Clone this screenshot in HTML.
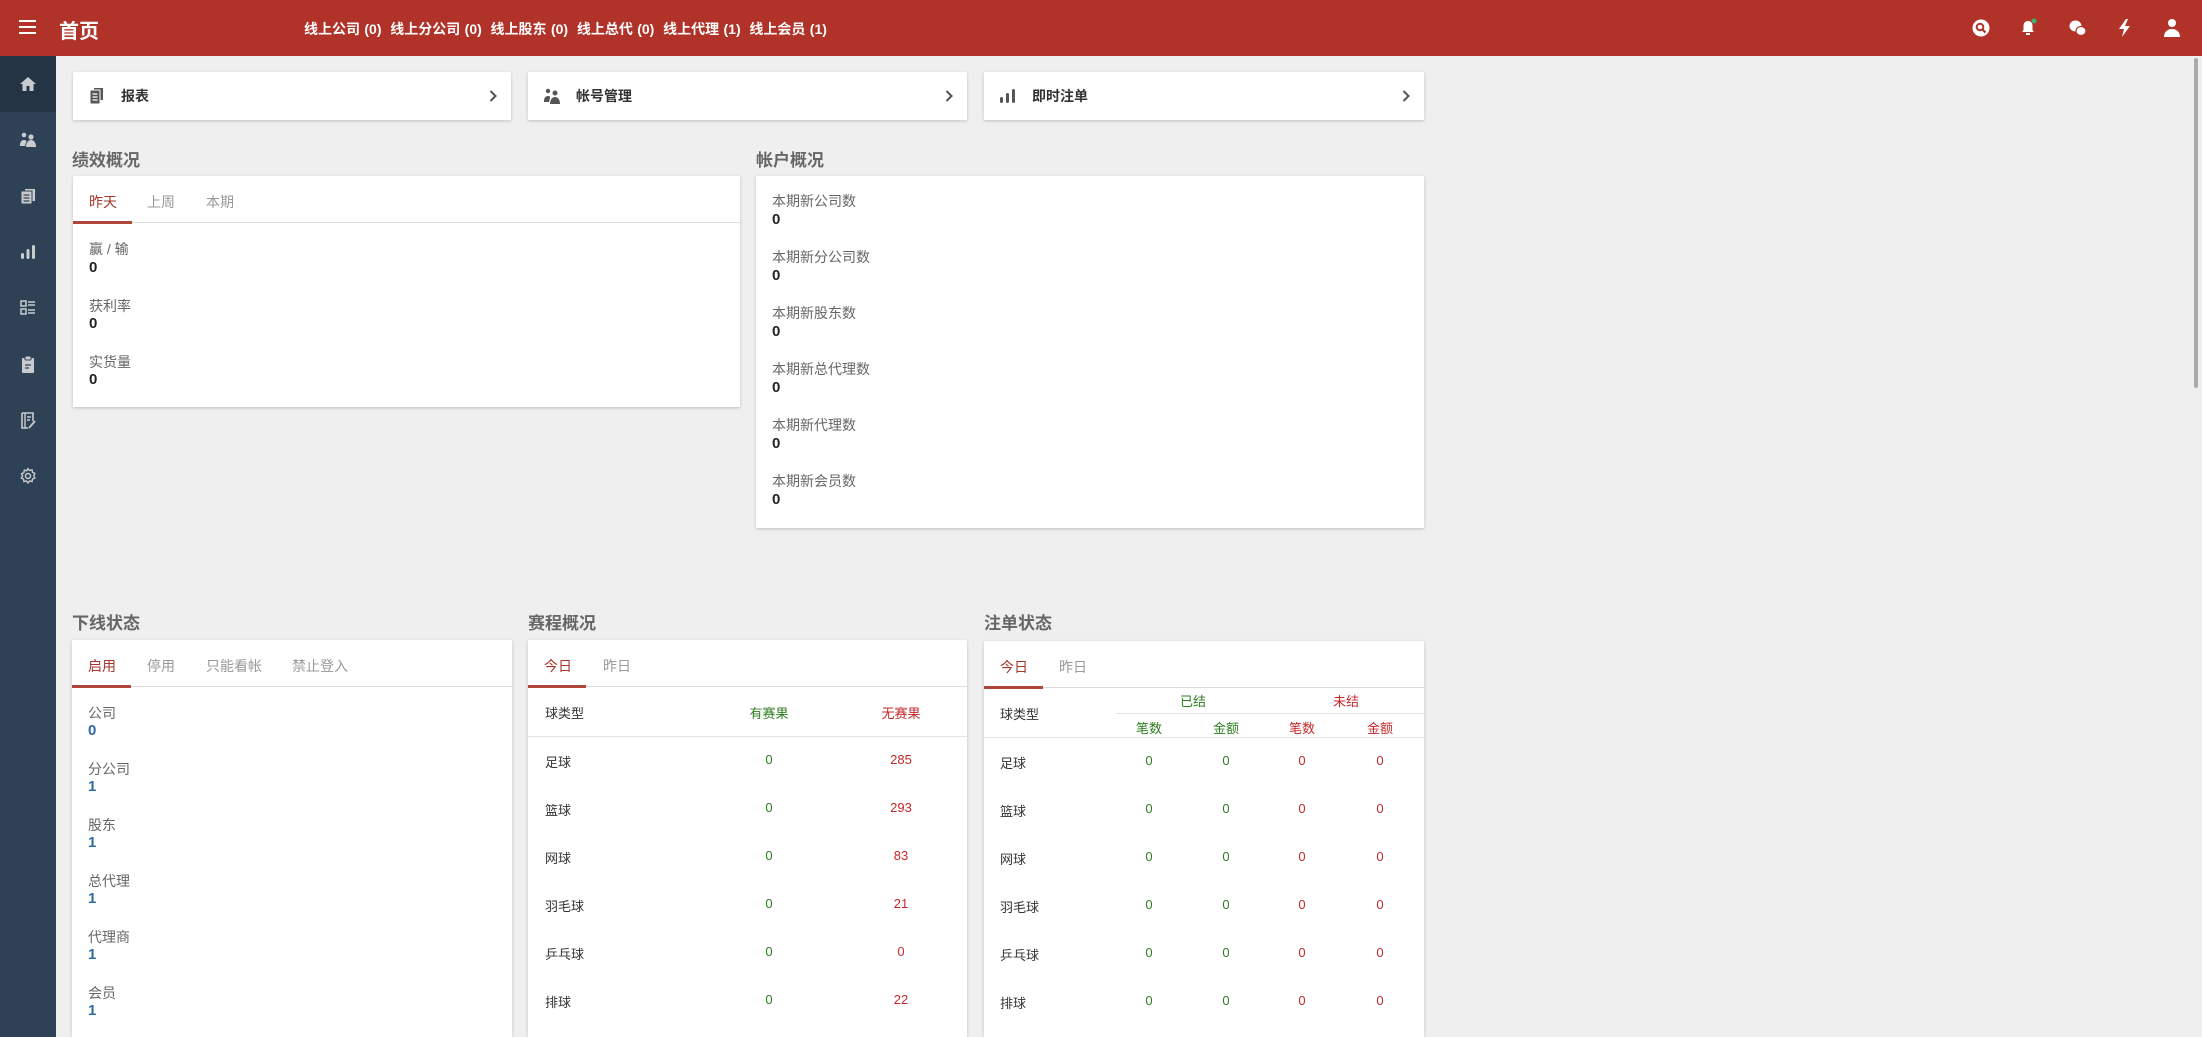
<!DOCTYPE html>
<html><head><meta charset="utf-8"><style>
*{box-sizing:border-box;margin:0;padding:0}
html{width:2202px;height:1037px;overflow:hidden;background:#efeff0}
body{width:2202px;height:1037px;overflow:hidden;font-family:"Liberation Sans","Noto Sans CJK SC",sans-serif;color:#333;position:relative;background:#efeff0}
.hdr{position:absolute;left:0;top:0;width:2202px;height:56px;background:#b03228;color:#fff}
.side{position:absolute;left:0;top:56px;width:56px;height:981px;background:#2f4255}
.side .act{position:absolute;left:0;top:0;width:56px;height:56px;background:#243444}
.side svg{position:absolute;left:18px;width:20px;height:20px}
.card{position:absolute;background:#fff;box-shadow:0 1px 3px rgba(0,0,0,.2)}
.nav{height:48px;top:72px}
.nav .t{position:absolute;left:48px;top:14px;font-size:14px;font-weight:bold;color:#333}
.nav svg.i{position:absolute;left:15px;top:15px;width:18px;height:18px}
.nav .ch{position:absolute;right:14px;top:17px;width:8px;height:14px}
.ttl{position:absolute;font-size:17px;color:#666;font-weight:600}
.tabs{position:absolute;left:0;top:0;right:0;height:47px;border-bottom:1px solid #ddd}
.tab{position:absolute;top:16px;font-size:14px;color:#999}
.tab.a{color:#a5362c}
.ul{position:absolute;left:0;top:45px;height:3px;background:#b0453a}
.lb{position:absolute;font-size:14px;color:#666}
.v{position:absolute;font-size:15px;font-weight:bold;color:#222}
.bl{color:#2f6aa3}
.c{position:absolute;font-size:13px;transform:translateX(-50%)}
.g{color:#2e7d1e}.r{color:#c62828}
.hl{position:absolute;height:1px;background:#e2e2e2}
</style></head><body>
<div class="hdr">
 <div style="position:absolute;left:19px;top:20px;width:17px;height:2px;background:#fff;box-shadow:0 6px 0 #fff,0 12px 0 #fff"></div>
 <div style="position:absolute;left:59px;top:15px;font-size:20px;font-weight:bold">首页</div>
 <div style="position:absolute;left:304px;top:19px;font-size:14px;font-weight:bold;word-spacing:0.5px;white-space:nowrap">线上公司 (0)&nbsp; 线上分公司 (0)&nbsp; 线上股东 (0)&nbsp; 线上总代 (0)&nbsp; 线上代理 (1)&nbsp; 线上会员 (1)</div>
 <svg style="position:absolute;left:1972px;top:19px" width="18" height="18" viewBox="0 0 18 18"><circle cx="9" cy="9" r="8.5" fill="#fff"/><circle cx="8" cy="8" r="3.3" fill="none" stroke="#b03228" stroke-width="2"/><path d="M10.5 10.5l3 3" stroke="#b03228" stroke-width="2.2"/></svg>
 <svg style="position:absolute;left:2019px;top:18px" width="20" height="20" viewBox="0 0 20 20"><path d="M9 3c-3 0-4.5 2.3-4.5 5v4l-1.5 2h12l-1.5-2V8C13.5 5.3 12 3 9 3z" fill="#fff"/><rect x="7" y="15" width="4" height="2" fill="#fff"/><circle cx="15" cy="3" r="2.5" fill="#3cb371"/></svg>
 <svg style="position:absolute;left:2068px;top:18px" width="20" height="20" viewBox="0 0 20 20"><ellipse cx="7.5" cy="8" rx="6" ry="5.5" fill="#fff"/><ellipse cx="13" cy="13" rx="5" ry="4.5" fill="#fff" stroke="#b03228" stroke-width="1.2"/></svg>
 <svg style="position:absolute;left:2116px;top:18px" width="18" height="20" viewBox="0 0 18 20"><path d="M10 1L3 11h5l-2 8 8-11H9l3-7z" fill="#fff"/></svg>
 <svg style="position:absolute;left:2163px;top:18px" width="18" height="20" viewBox="0 0 18 20"><circle cx="9" cy="5" r="4" fill="#fff"/><path d="M1 19c0-5 3.5-8 8-8s8 3 8 8z" fill="#fff"/></svg>
</div>
<div style="position:absolute;left:2194px;top:58px;width:4px;height:330px;background:#aaa;border-radius:2px"></div>
<div class="side">
 <div class="act"></div>
 <svg style="top:18px" viewBox="0 0 20 20"><path d="M10 3L2 10h2.5v7h4v-5h3v5h4v-7H18z" fill="#c8ccd0"/></svg>
 <svg style="top:74px" viewBox="0 0 20 20"><circle cx="6" cy="5" r="2.3" fill="#c8ccd0"/><circle cx="13" cy="7" r="2.6" fill="#c8ccd0"/><path d="M2 15c0-3 1.5-5 4-5 1.2 0 2 .4 2.6 1L7 16H2z" fill="#c8ccd0"/><path d="M8 17c0-4 2-7 5-7s5 3 5 7z" fill="#c8ccd0"/></svg>
 <svg style="top:130px" viewBox="0 0 20 20"><rect x="7" y="3" width="10" height="12" fill="#c8ccd0"/><rect x="3" y="5" width="11" height="13" fill="#c8ccd0" stroke="#2f4255" stroke-width="1"/><path d="M5.5 9h6M5.5 12h6M5.5 15h6" stroke="#2f4255" stroke-width="1.3"/></svg>
 <svg style="top:186px" viewBox="0 0 20 20"><rect x="3" y="11" width="3" height="6" rx="1.5" fill="#c8ccd0"/><rect x="8.5" y="7" width="3" height="10" rx="1.5" fill="#c8ccd0"/><rect x="14" y="3" width="3" height="14" rx="1.5" fill="#c8ccd0"/></svg>
 <svg style="top:242px" viewBox="0 0 20 20"><rect x="3" y="3" width="5" height="5" fill="none" stroke="#c8ccd0" stroke-width="1.5"/><rect x="3" y="11" width="5" height="5" fill="none" stroke="#c8ccd0" stroke-width="1.5"/><path d="M10 4h7M10 7h7M10 12h7M10 15h7" stroke="#c8ccd0" stroke-width="1.5"/></svg>
 <svg style="top:298px" viewBox="0 0 20 20"><rect x="4" y="4" width="12" height="15" rx="1" fill="#c8ccd0"/><rect x="7" y="2" width="6" height="4" rx="1" fill="#c8ccd0" stroke="#2f4255"/><path d="M7 11h6M7 14h4" stroke="#2f4255" stroke-width="1.3"/></svg>
 <svg style="top:354px" viewBox="0 0 20 20"><path d="M4 3h11v8M4 3v15h6" fill="none" stroke="#c8ccd0" stroke-width="1.6"/><path d="M7 3v15" stroke="#c8ccd0" stroke-width="1.4"/><path d="M9 7h4M9 10h3" stroke="#c8ccd0" stroke-width="1.4"/><path d="M11 18l6-7" stroke="#c8ccd0" stroke-width="1.8"/></svg>
 <svg style="top:410px" viewBox="0 0 20 20"><circle cx="10" cy="10" r="2.5" fill="none" stroke="#c8ccd0" stroke-width="1.5"/><path d="M10 2.5l1.6 2 2.5-.7.4 2.6 2.4 1-1.2 2.3 1.2 2.3-2.4 1-.4 2.6-2.5-.7-1.6 2-1.6-2-2.5.7-.4-2.6-2.4-1L4.7 10 3.5 7.7l2.4-1 .4-2.6 2.5.7z" fill="none" stroke="#c8ccd0" stroke-width="1.4" stroke-linejoin="round"/></svg>
</div>

<div class="card nav" style="left:73px;width:438px">
 <svg class="i" viewBox="0 0 18 18"><rect x="6" y="1" width="9" height="12" fill="#555"/><rect x="2" y="3" width="10" height="14" fill="#555" stroke="#fff"/><path d="M4.5 7h5M4.5 10h5M4.5 13h5" stroke="#fff" stroke-width="1.3"/></svg>
 <div class="t">报表</div><svg class="ch" viewBox="0 0 8 14"><path d="M1.5 2l5 5-5 5" fill="none" stroke="#555" stroke-width="2"/></svg></div>
<div class="card nav" style="left:528px;width:439px">
 <svg class="i" viewBox="0 0 18 18"><circle cx="5" cy="4" r="2.2" fill="#555"/><circle cx="12" cy="6" r="2.5" fill="#555"/><path d="M1 14c0-3 1.5-5 4-5 1 0 1.8.3 2.3.9L6 15H1z" fill="#555"/><path d="M7 17c0-4 2-7 5-7s5 3 5 7z" fill="#555"/></svg>
 <div class="t">帐号管理</div><svg class="ch" viewBox="0 0 8 14"><path d="M1.5 2l5 5-5 5" fill="none" stroke="#555" stroke-width="2"/></svg></div>
<div class="card nav" style="left:984px;width:440px">
 <svg class="i" viewBox="0 0 18 18"><rect x="1" y="10" width="3" height="6" rx="1.5" fill="#555"/><rect x="7" y="6" width="3" height="10" rx="1.5" fill="#555"/><rect x="13" y="2" width="3" height="14" rx="1.5" fill="#555"/></svg>
 <div class="t">即时注单</div><svg class="ch" viewBox="0 0 8 14"><path d="M1.5 2l5 5-5 5" fill="none" stroke="#555" stroke-width="2"/></svg></div>

<div class="ttl" style="left:72px;top:146px">绩效概况</div>
<div class="card" style="left:73px;top:176px;width:667px;height:231px">
 <div class="tabs"><span class="tab a" style="left:16px">昨天</span><span class="tab" style="left:74px">上周</span><span class="tab" style="left:133px">本期</span><div class="ul" style="width:59px"></div></div>
 <div class="lb" style="left:16px;top:63px">赢 / 输</div><div class="v" style="left:16px;top:83px">0</div>
 <div class="lb" style="left:16px;top:120px">获利率</div><div class="v" style="left:16px;top:139px">0</div>
 <div class="lb" style="left:16px;top:176px">实货量</div><div class="v" style="left:16px;top:195px">0</div>
</div>

<div class="ttl" style="left:756px;top:146px">帐户概况</div>
<div class="card" style="left:756px;top:176px;width:668px;height:352px">
 <div class="lb" style="left:16px;top:15px">本期新公司数</div><div class="v" style="left:16px;top:35px">0</div>
 <div class="lb" style="left:16px;top:71px">本期新分公司数</div><div class="v" style="left:16px;top:91px">0</div>
 <div class="lb" style="left:16px;top:127px">本期新股东数</div><div class="v" style="left:16px;top:147px">0</div>
 <div class="lb" style="left:16px;top:183px">本期新总代理数</div><div class="v" style="left:16px;top:203px">0</div>
 <div class="lb" style="left:16px;top:239px">本期新代理数</div><div class="v" style="left:16px;top:259px">0</div>
 <div class="lb" style="left:16px;top:295px">本期新会员数</div><div class="v" style="left:16px;top:315px">0</div>
</div>

<div class="ttl" style="left:72px;top:609px">下线状态</div>
<div class="card" style="left:72px;top:640px;width:440px;height:397px">
 <div class="tabs"><span class="tab a" style="left:16px">启用</span><span class="tab" style="left:75px">停用</span><span class="tab" style="left:134px">只能看帐</span><span class="tab" style="left:220px">禁止登入</span><div class="ul" style="width:59px"></div></div>
 <div class="lb" style="left:16px;top:63px">公司</div><div class="v bl" style="left:16px;top:82px">0</div>
 <div class="lb" style="left:16px;top:119px">分公司</div><div class="v bl" style="left:16px;top:138px">1</div>
 <div class="lb" style="left:16px;top:175px">股东</div><div class="v bl" style="left:16px;top:194px">1</div>
 <div class="lb" style="left:16px;top:231px">总代理</div><div class="v bl" style="left:16px;top:250px">1</div>
 <div class="lb" style="left:16px;top:287px">代理商</div><div class="v bl" style="left:16px;top:306px">1</div>
 <div class="lb" style="left:16px;top:343px">会员</div><div class="v bl" style="left:16px;top:362px">1</div>
</div>

<div class="ttl" style="left:528px;top:609px">赛程概况</div>
<div class="card" style="left:528px;top:640px;width:439px;height:397px">
 <div class="tabs"><span class="tab a" style="left:16px">今日</span><span class="tab" style="left:75px">昨日</span><div class="ul" style="width:58px"></div></div>
 <div class="c" style="left:17px;top:63px;transform:none">球类型</div><div class="c g" style="left:241px;top:63px">有赛果</div><div class="c r" style="left:373px;top:63px">无赛果</div>
 <div class="hl" style="left:0;right:0;top:96px"></div>
 <div class="c" style="left:17px;top:112px;transform:none">足球</div><div class="c g" style="left:241px;top:112px">0</div><div class="c r" style="left:373px;top:112px">285</div>
 <div class="c" style="left:17px;top:160px;transform:none">篮球</div><div class="c g" style="left:241px;top:160px">0</div><div class="c r" style="left:373px;top:160px">293</div>
 <div class="c" style="left:17px;top:208px;transform:none">网球</div><div class="c g" style="left:241px;top:208px">0</div><div class="c r" style="left:373px;top:208px">83</div>
 <div class="c" style="left:17px;top:256px;transform:none">羽毛球</div><div class="c g" style="left:241px;top:256px">0</div><div class="c r" style="left:373px;top:256px">21</div>
 <div class="c" style="left:17px;top:304px;transform:none">乒乓球</div><div class="c g" style="left:241px;top:304px">0</div><div class="c r" style="left:373px;top:304px">0</div>
 <div class="c" style="left:17px;top:352px;transform:none">排球</div><div class="c g" style="left:241px;top:352px">0</div><div class="c r" style="left:373px;top:352px">22</div>
</div>

<div class="ttl" style="left:984px;top:609px">注单状态</div>
<div class="card" style="left:984px;top:641px;width:440px;height:396px">
 <div class="tabs"><span class="tab a" style="left:16px">今日</span><span class="tab" style="left:75px">昨日</span><div class="ul" style="width:59px"></div></div>
 <div class="c" style="left:16px;top:63px;transform:none">球类型</div>
 <div class="c g" style="left:209px;top:50px">已结</div><div class="c r" style="left:362px;top:50px">未结</div>
 <div class="hl" style="left:132px;right:0;top:72px"></div>
 <div class="c g" style="left:165px;top:77px">笔数</div><div class="c g" style="left:242px;top:77px">金额</div><div class="c r" style="left:318px;top:77px">笔数</div><div class="c r" style="left:396px;top:77px">金额</div>
 <div class="hl" style="left:0;right:0;top:96px"></div>
 <div class="c" style="left:16px;top:112px;transform:none">足球</div><div class="c g" style="left:165px;top:112px">0</div><div class="c g" style="left:242px;top:112px">0</div><div class="c r" style="left:318px;top:112px">0</div><div class="c r" style="left:396px;top:112px">0</div>
 <div class="c" style="left:16px;top:160px;transform:none">篮球</div><div class="c g" style="left:165px;top:160px">0</div><div class="c g" style="left:242px;top:160px">0</div><div class="c r" style="left:318px;top:160px">0</div><div class="c r" style="left:396px;top:160px">0</div>
 <div class="c" style="left:16px;top:208px;transform:none">网球</div><div class="c g" style="left:165px;top:208px">0</div><div class="c g" style="left:242px;top:208px">0</div><div class="c r" style="left:318px;top:208px">0</div><div class="c r" style="left:396px;top:208px">0</div>
 <div class="c" style="left:16px;top:256px;transform:none">羽毛球</div><div class="c g" style="left:165px;top:256px">0</div><div class="c g" style="left:242px;top:256px">0</div><div class="c r" style="left:318px;top:256px">0</div><div class="c r" style="left:396px;top:256px">0</div>
 <div class="c" style="left:16px;top:304px;transform:none">乒乓球</div><div class="c g" style="left:165px;top:304px">0</div><div class="c g" style="left:242px;top:304px">0</div><div class="c r" style="left:318px;top:304px">0</div><div class="c r" style="left:396px;top:304px">0</div>
 <div class="c" style="left:16px;top:352px;transform:none">排球</div><div class="c g" style="left:165px;top:352px">0</div><div class="c g" style="left:242px;top:352px">0</div><div class="c r" style="left:318px;top:352px">0</div><div class="c r" style="left:396px;top:352px">0</div>
</div>
</body></html>
